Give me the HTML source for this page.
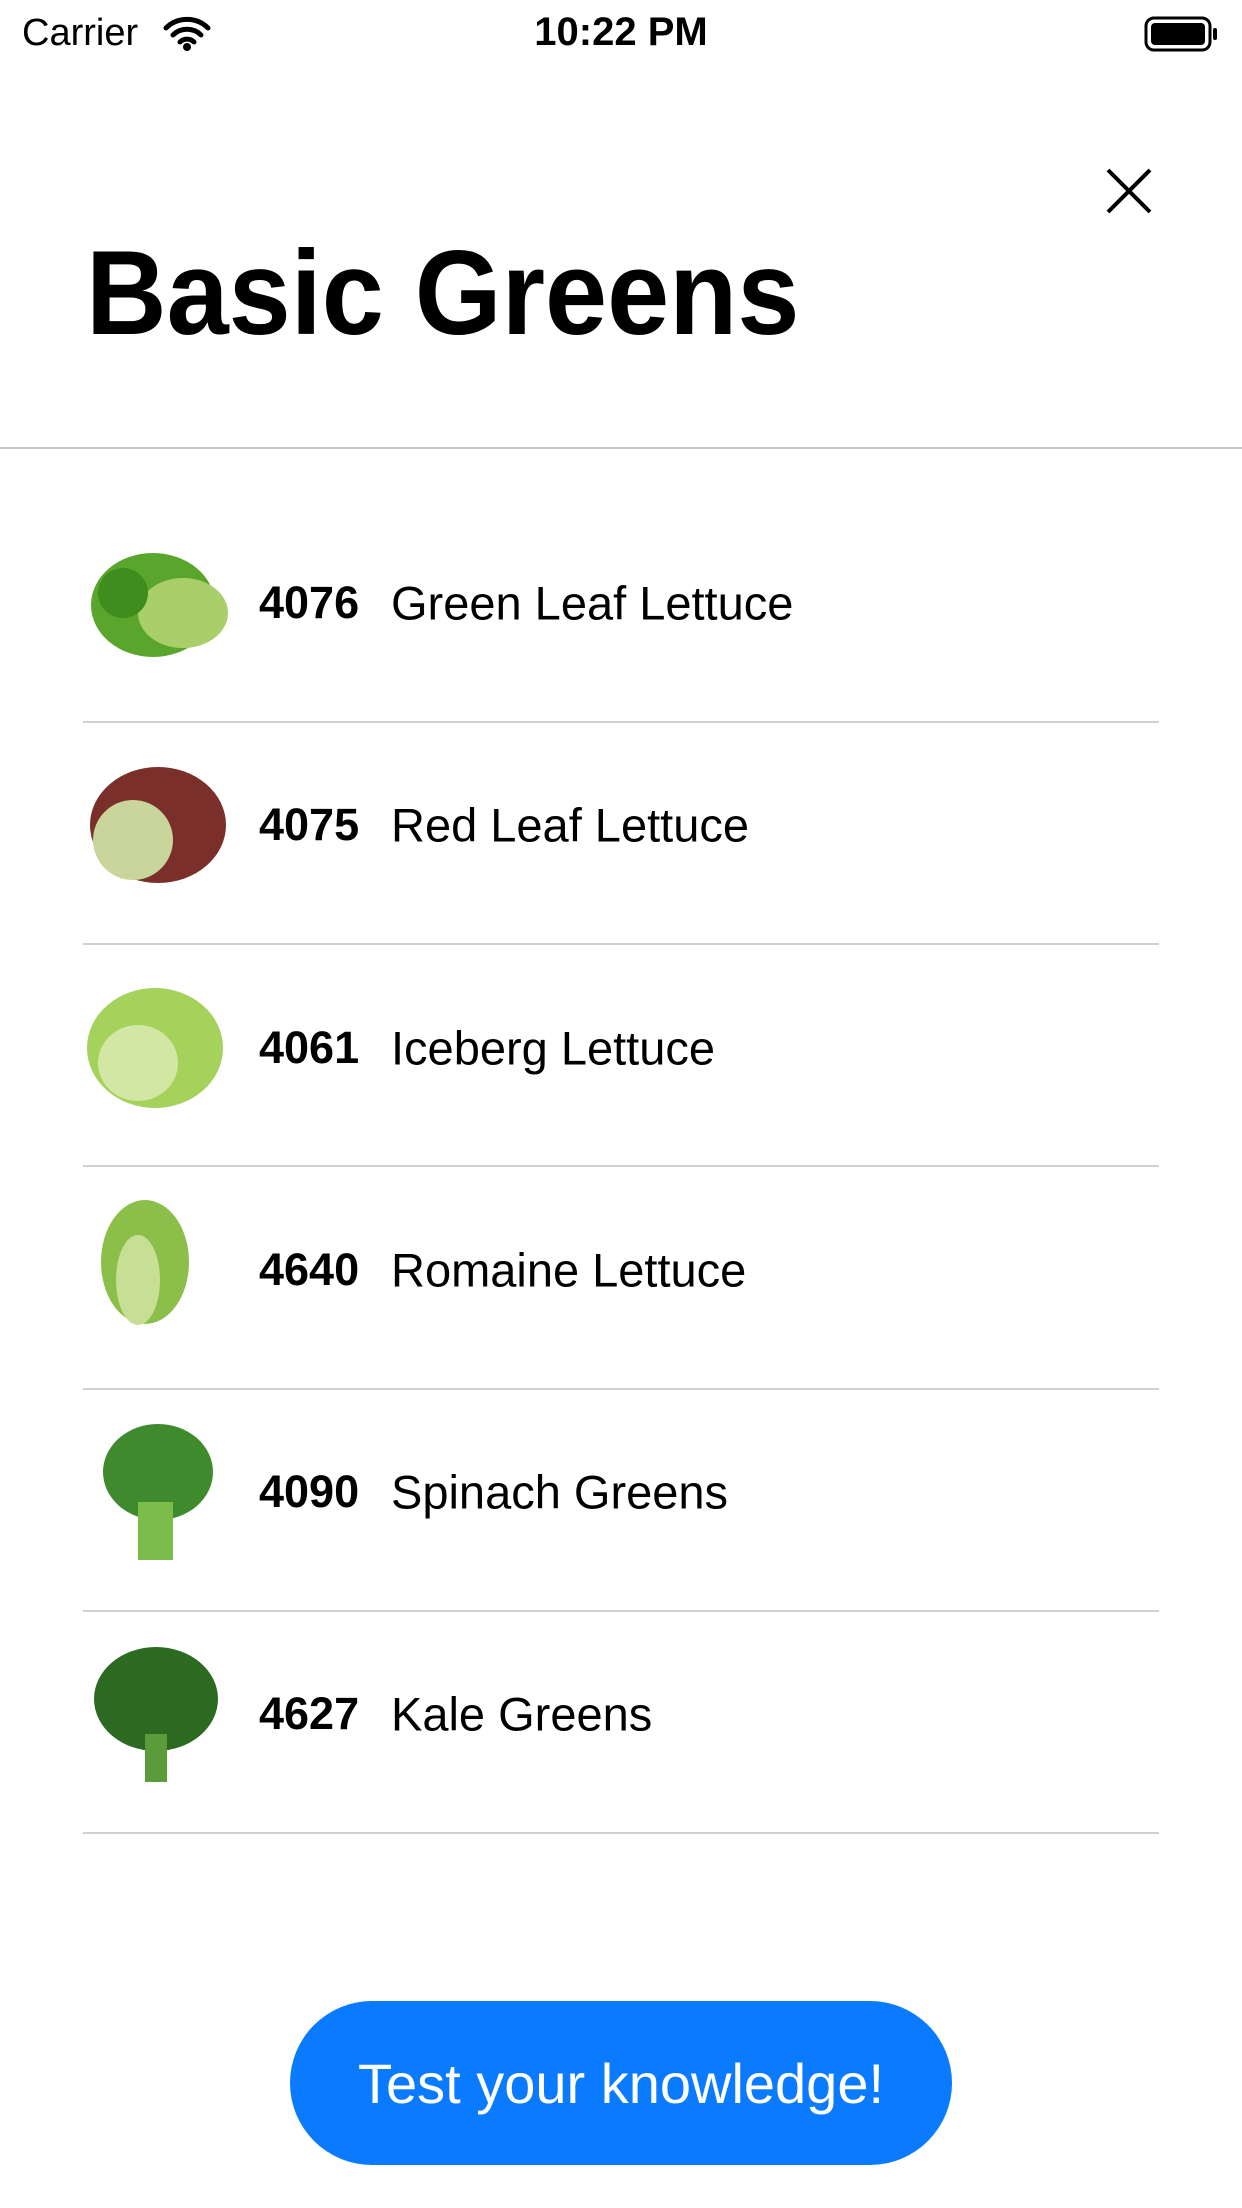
<!DOCTYPE html>
<html><head><meta charset="utf-8"><style>
body{margin:0;width:1242px;height:2208px;background:#fff;position:relative;font-family:"Liberation Sans",sans-serif;overflow:hidden;color:#000}
.a{position:absolute}
.sep{position:absolute;left:83px;width:1076px;height:2px;background:#d0d0d0}
.code{position:absolute;left:259px;font-size:45px;font-weight:bold;transform:translateY(-50%)}
.name{position:absolute;left:391px;font-size:47px;transform:translateY(-50%)}
svg.img{position:absolute;left:83px;width:150px;height:140px}
</style></head><body>
<div class="a" style="left:22px;top:12px;font-size:38px">Carrier</div>
<svg class="a" style="left:162px;top:16px" width="50" height="36" viewBox="0 0 50 36"><path d="M4 12a30 30 0 0 1 42 0M11 19a20 20 0 0 1 28 0M18 26a10 10 0 0 1 14 0" stroke="#000" stroke-width="5" fill="none" stroke-linecap="round"/><circle cx="25" cy="31" r="4"/></svg>
<div class="a" style="left:0;width:1242px;text-align:center;top:10px;font-size:40px;font-weight:bold">10:22 PM</div>
<svg class="a" style="left:1144px;top:16px" width="74" height="36" viewBox="0 0 74 36"><rect x="2" y="2" width="64" height="32" rx="8" fill="none" stroke="#000" stroke-width="3"/><rect x="7" y="7" width="54" height="22" rx="4"/><rect x="69" y="12" width="4" height="12" rx="2"/></svg>
<svg class="a" style="left:1106px;top:168px" width="46" height="46" viewBox="0 0 46 46"><path d="M2 2L44 44M44 2L2 44" stroke="#000" stroke-width="4"/></svg>
<div class="a" style="left:86px;top:224px;font-size:120px;font-weight:bold;transform:scaleX(0.93);transform-origin:left top;white-space:nowrap">Basic Greens</div>
<div class="a" style="left:0;top:447px;width:1242px;height:2px;background:#c8c8c8"></div>

<svg class="img" style="top:533px" viewBox="0 0 150 140"><ellipse cx="70" cy="72" rx="62" ry="52" fill="#5aa52c"/><ellipse cx="100" cy="80" rx="45" ry="35" fill="#a9cf6a"/><circle cx="40" cy="60" r="25" fill="#3f8c1f"/></svg>
<div class="code" style="top:603px">4076</div><div class="name" style="top:603px">Green Leaf Lettuce</div>
<div class="sep" style="top:721px"></div>

<svg class="img" style="top:755px" viewBox="0 0 150 140"><ellipse cx="75" cy="70" rx="68" ry="58" fill="#7a2f2a"/><ellipse cx="50" cy="85" rx="40" ry="40" fill="#c9d59a"/></svg>
<div class="code" style="top:825px">4075</div><div class="name" style="top:825px">Red Leaf Lettuce</div>
<div class="sep" style="top:943px"></div>

<svg class="img" style="top:978px" viewBox="0 0 150 140"><ellipse cx="72" cy="70" rx="68" ry="60" fill="#a4d25a"/><ellipse cx="55" cy="85" rx="40" ry="38" fill="#d3e7a4"/></svg>
<div class="code" style="top:1048px">4061</div><div class="name" style="top:1048px">Iceberg Lettuce</div>
<div class="sep" style="top:1165px"></div>

<svg class="img" style="top:1200px" viewBox="0 0 150 140"><ellipse cx="62" cy="62" rx="44" ry="62" fill="#8cbf4a"/><ellipse cx="55" cy="80" rx="22" ry="45" fill="#c6df95"/></svg>
<div class="code" style="top:1270px">4640</div><div class="name" style="top:1270px">Romaine Lettuce</div>
<div class="sep" style="top:1388px"></div>

<svg class="img" style="top:1422px" viewBox="0 0 150 140"><ellipse cx="75" cy="50" rx="55" ry="48" fill="#3e8a2c"/><rect x="55" y="80" width="35" height="58" fill="#7cbc4a"/></svg>
<div class="code" style="top:1492px">4090</div><div class="name" style="top:1492px">Spinach Greens</div>
<div class="sep" style="top:1610px"></div>

<svg class="img" style="top:1644px" viewBox="0 0 150 140"><ellipse cx="73" cy="55" rx="62" ry="52" fill="#2c6a22"/><rect x="62" y="90" width="22" height="48" fill="#5c9b3a"/></svg>
<div class="code" style="top:1714px">4627</div><div class="name" style="top:1714px">Kale Greens</div>
<div class="sep" style="top:1832px"></div>

<div class="a" style="left:290px;top:2001px;width:662px;height:164px;border-radius:82px;background:#0a7aff;color:#fff;font-size:56px;display:flex;align-items:center;justify-content:center">Test your knowledge!</div>
</body></html>
